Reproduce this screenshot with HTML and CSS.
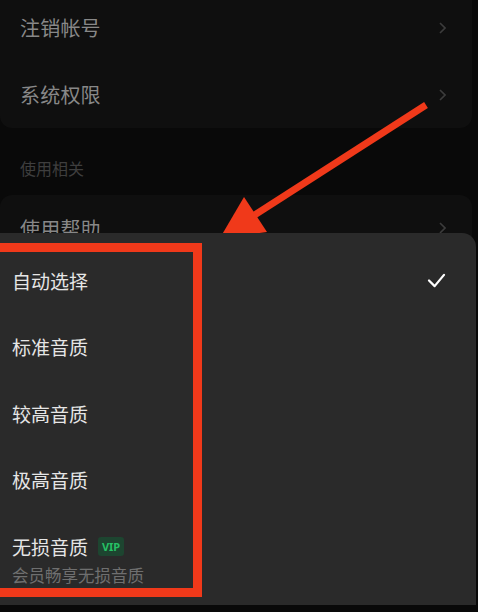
FILE: index.html
```html
<!DOCTYPE html>
<html lang="zh">
<head>
<meta charset="utf-8">
<link rel="stylesheet" href="styles.css">
</head>
<body>
<div class="page">
  <div class="card card-top">
    <div class="row"><span>注销帐号</span><svg class="chev" viewBox="0 0 7 12"><path d="M1 1l5 5-5 5"/></svg></div>
    <div class="row"><span>系统权限</span><svg class="chev" viewBox="0 0 7 12"><path d="M1 1l5 5-5 5"/></svg></div>
  </div>
  <div class="section">使用相关</div>
  <div class="card card-help">
    <div class="row"><span>使用帮助</span><svg class="chev" viewBox="0 0 7 12"><path d="M1 1l5 5-5 5"/></svg></div>
  </div>

  <svg class="arrow" viewBox="0 0 478 612">
    <line x1="426" y1="105" x2="250" y2="218" stroke="#f0391a" stroke-width="7" stroke-linecap="butt"/>
    <polygon points="244,197 267,232 220,238" fill="#f0391a"/>
  </svg>

  <div class="sheet">
    <div class="opt"><span>自动选择</span><svg class="check" viewBox="0 0 20 16"><path d="M2 8l6 6L18 2"/></svg></div>
    <div class="opt"><span>标准音质</span></div>
    <div class="opt"><span>较高音质</span></div>
    <div class="opt"><span>极高音质</span></div>
    <div class="opt opt-last">
      <div class="title"><span>无损音质</span><span class="vip">VIP</span></div>
      <div class="sub">会员畅享无损音质</div>
    </div>
  </div>

  <div class="mark"></div>
</div>
</body>
</html>
```
FILE: styles.css
```css
html, body {
  margin: 0;
  padding: 0;
  background: #090909;
}
body {
  width: 478px;
  height: 612px;
  overflow: hidden;
  font-family: "Noto Sans CJK SC", "Noto Sans", sans-serif;
}
.page {
  position: relative;
  width: 478px;
  height: 612px;
  overflow: hidden;
}
.card {
  background: #0f0f0f;
  margin: 0 6px 0 0;
  border-radius: 12px;
}
.card-top {
  margin-top: -18px;
  padding-top: 12px;
  padding-bottom: 0;
}
.row {
  height: 67px;
  display: flex;
  align-items: center;
  justify-content: space-between;
  padding: 0 26px 0 20px;
  font-size: 20px;
  color: #888888;
  letter-spacing: 0.2px;
}
.chev {
  width: 7px;
  height: 12px;
  fill: none;
  stroke: #3c3c3c;
  stroke-width: 1.6;
}
.section {
  height: 54px;
  padding: 0 20px;
  display: flex;
  align-items: center;
  margin-top: 13px;
  font-size: 16px;
  color: #3e3e3e;
}
.card-help {
  padding-top: 0;
  height: 100px;
}
.card-help .row {
  height: 66px;
}
.arrow {
  position: absolute;
  left: 0;
  top: 0;
  width: 478px;
  height: 612px;
}
.sheet {
  position: absolute;
  left: 0;
  right: 2px;
  top: 233px;
  height: 372px;
  background: #2a2a2a;
  border-top-right-radius: 14px;
  padding-top: 14px;
  box-sizing: border-box;
}
.opt {
  height: 66.5px;
  display: flex;
  align-items: center;
  justify-content: space-between;
  padding: 0 30px 0 12px;
  font-size: 19px;
  color: #e6e6e6;
}
.check {
  width: 19px;
  height: 15px;
  fill: none;
  stroke: #ffffff;
  stroke-width: 2.4;
  stroke-linecap: round;
  stroke-linejoin: round;
}
.opt-last {
  display: block;
  height: auto;
  padding-top: 20px;
}
.title {
  display: flex;
  align-items: center;
  gap: 10px;
  height: 26px;
}
.vip {
  display: inline-flex;
  align-items: center;
  justify-content: center;
  width: 26px;
  height: 19px;
  border-radius: 3px;
  background: #1d4530;
  color: #26c165;
  font-family: "Noto Sans", sans-serif;
  font-weight: 700;
  font-size: 11px;
}
.sub {
  margin-top: 5px;
  font-size: 16.5px;
  line-height: 22px;
  color: #6f6f6f;
}
.mark {
  position: absolute;
  left: -20px;
  top: 243px;
  width: 222px;
  height: 354px;
  box-sizing: border-box;
  border: 9px solid #f0391a;
  pointer-events: none;
}
```
